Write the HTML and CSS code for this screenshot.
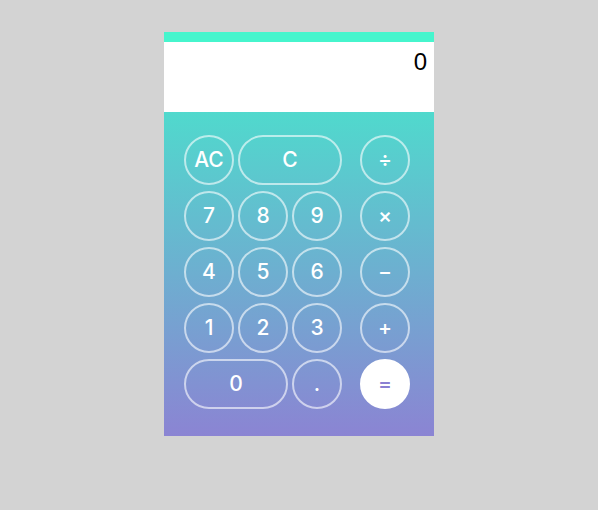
FILE: index.html
```html
<!DOCTYPE html>
<html>
<head>
<meta charset="utf-8">
<link rel="stylesheet" href="styles.css">
</head>
<body>
<div class="calc">
  <div class="topbar"></div>
  <div class="display">0</div>
  <div class="keys">
    <button class="key">AC</button>
    <button class="key wide">C</button>
    <button class="key op">÷</button>
    <button class="key">7</button>
    <button class="key">8</button>
    <button class="key">9</button>
    <button class="key op">×</button>
    <button class="key">4</button>
    <button class="key">5</button>
    <button class="key">6</button>
    <button class="key op">−</button>
    <button class="key">1</button>
    <button class="key">2</button>
    <button class="key">3</button>
    <button class="key op">+</button>
    <button class="key wide">0</button>
    <button class="key">.</button>
    <button class="key op eq">=</button>
  </div>
</div>
</body>
</html>
```
FILE: styles.css
```css
html, body {
  margin: 0;
  padding: 0;
  background: #d3d3d3;
}
body {
  padding: 32px 0 0 164px;
  font-family: "Liberation Sans", Arial, sans-serif;
}
.calc {
  width: 270px;
}
.topbar {
  height: 10px;
  background: #46f5cd;
}
.display {
  height: 70px;
  box-sizing: border-box;
  background: #ffffff;
  color: #000;
  font-size: 24px;
  line-height: 24px;
  text-align: right;
  padding: 8px 7px 0 0;
}
.keys {
  background: linear-gradient(to bottom, #50d9cd, #8b84d3);
  padding: 23px 24px 27px 20px;
  display: grid;
  grid-template-columns: 50px 50px 50px 1fr;
  grid-auto-rows: 50px;
  column-gap: 4px;
  row-gap: 6px;
}
.key {
  box-sizing: border-box;
  width: 50px;
  height: 50px;
  border: 2px solid rgba(255, 255, 255, 0.6);
  border-radius: 25px;
  background: transparent;
  color: #ffffff;
  font-family: Inter, "Liberation Sans", Arial, sans-serif;
  font-weight: 500;
  font-size: 21px;
  padding: 0;
  margin: 0;
  line-height: 46px;
  text-align: center;
}
.wide {
  width: 104px;
  grid-column: span 2;
}
.op {
  grid-column: 4;
  justify-self: end;
}
.eq {
  background: #ffffff;
  border-color: #ffffff;
  color: #8a80d2;
}
```
